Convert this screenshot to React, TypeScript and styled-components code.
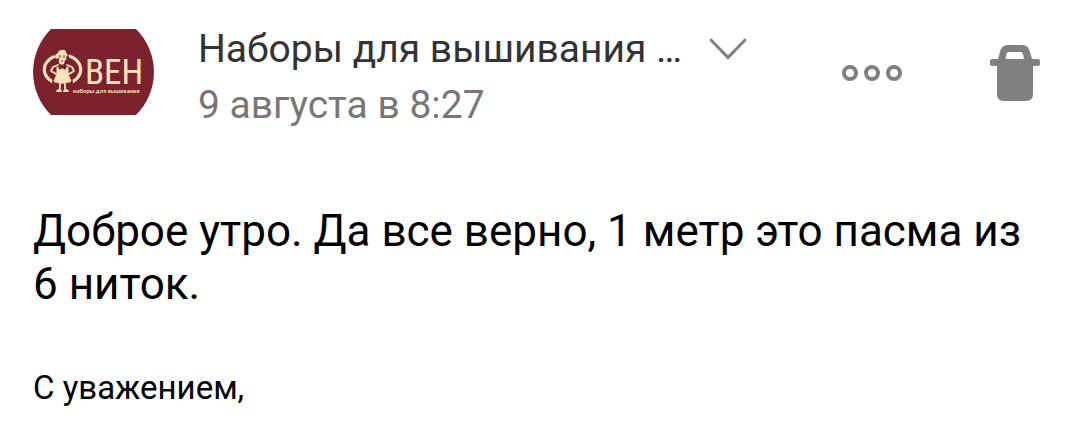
import React from "react";
import styled, { createGlobalStyle } from "styled-components";

const GlobalStyle = createGlobalStyle`
  * { box-sizing: border-box; }
  body {
    margin: 0;
    background: #fff;
    color: #000;
    font-family: Roboto, "Noto Sans", sans-serif;
  }
`;

const Message = styled.article`
  padding: 21px 33px 16px;
`;

const Header = styled.header`
  display: flex;
  align-items: flex-start;
`;

const Avatar = styled.svg`
  flex: none;
  width: 121px;
  height: 87px;
  margin: 8px 44px 0 0;
`;

const Details = styled.div`
  flex: 1;
  min-width: 0;
`;

const SenderRow = styled.div`
  display: flex;
  align-items: center;
  gap: 26px;
`;

const Line = styled.p<{ $muted?: boolean }>`
  margin: 0;
  min-width: 0;
  overflow: hidden;
  white-space: nowrap;
  text-overflow: ellipsis;
  font-size: 39px;
  line-height: 56px;
  color: ${(p) => (p.$muted ? "#777" : "#333")};
`;

const IconButton = styled.button`
  display: flex;
  flex: none;
  padding: 0;
  border: 0;
  background: none;
  color: #808080;
  cursor: pointer;
`;

const Actions = styled.div`
  display: flex;
  flex: none;
  align-items: center;
  gap: 88px;
  height: 104px;
  padding-right: 7px;
`;

const Body = styled.section`
  margin-top: 72px;
`;

const Text = styled.p`
  margin: 0;
  font-size: 44px;
  line-height: 53px;
`;

const Signature = styled.p`
  margin: 57px 0 0;
  font-size: 33px;
  line-height: 40px;
`;

const LogoText = styled.text`
  fill: #fbe3b9;
`;

const LogoName = styled.tspan`
  font-family: "Roboto Condensed", Roboto, sans-serif;
  font-size: 35px;
`;

const LogoTagline = styled.tspan`
  font-family: Lato, sans-serif;
  font-size: 6px;
  font-weight: 700;
`;

function Logo() {
  return (
    <Avatar viewBox="0 0 121 87" role="img" aria-label="Овен">
      <path d="M18 0H103A60.500 60.500 0 0 1 103 86H18A60.500 60.500 0 0 1 18 0Z" fill="#7b222e" />
      <ellipse cx="29.500" cy="40.500" rx="18.200" ry="14.500" fill="none" stroke="#fbe3b9" strokeWidth="3.200" />
      <path
        d="M21 26L25 21L29 19L35 22L36 28L34 34L40 35L43 42L39 46L40 54L34 58H25L19 54L20 46L16 42L19 35L25 34L24 31Z"
        fill="#7b222e"
      />
      <path
        d="M22 28Q22 25 25 24Q25 21 29 21Q33 20 33 24Q36 26 33 28Q34 31 32 31L31 35Q28 37 26 34L26 29Q23 31 22 28Z"
        fill="#fbe3b9"
      />
      <path d="M27 26V29M31 26V29M28 32H30" fill="none" stroke="#7b222e" strokeWidth="1" />
      <path
        d="M24 38Q29 42 35 38L35 45L38 52Q36 54 34 53Q32 55 29 54Q26 55 24 53Q22 54 21 52L24 45Z"
        fill="#fbe3b9"
        stroke="#fbe3b9"
        strokeLinejoin="round"
      />
      <path
        d="M25 36L20 38L18 42L23 45M34 36L39 38L41 42L36 45M27 55V60L24 62H28M32 55V60L35 62H31"
        fill="none"
        stroke="#fbe3b9"
        strokeWidth="1.800"
        strokeLinejoin="round"
        strokeLinecap="round"
      />
      <path d="M26 37L29 39L33 37V41L29 39L26 41Z" fill="#7b222e" />
      <LogoText>
        <LogoName x="52" y="55">ВЕН</LogoName>
        <LogoTagline x="40" y="64">наборы для вышивания</LogoTagline>
      </LogoText>
    </Avatar>
  );
}

export default function App() {
  return (
    <>
      <GlobalStyle />
      <Message>
        <Header>
          <Logo />
          <Details>
            <SenderRow>
              <Line>Наборы для вышивания …</Line>
              <IconButton aria-label="Подробнее">
                <svg width="40" height="24" viewBox="0 0 40 24" fill="none" stroke="currentColor" strokeWidth="3" strokeLinecap="round">
                  <path d="M3 3L20 20.500L37 3" />
                </svg>
              </IconButton>
            </SenderRow>
            <Line $muted>9 августа в 8:27</Line>
          </Details>
          <Actions>
            <IconButton aria-label="Ещё">
              <svg width="60" height="18" viewBox="0 0 60 18" fill="none" stroke="currentColor" strokeWidth="4">
                <circle cx="8" cy="9" r="6" />
                <circle cx="30" cy="9" r="6" />
                <circle cx="52" cy="9" r="6" />
              </svg>
            </IconButton>
            <IconButton aria-label="Удалить">
              <svg width="50" height="56" viewBox="0 0 50 56" fill="currentColor">
                <path
                  fillRule="evenodd"
                  d="M18 0H32C37 0 39 3 40 7L42 14H47A3.500 3.500 0 0 1 47 21H43V49Q43 56 36 56H14Q7 56 7 49V21H3A3.500 3.500 0 0 1 3 14H8L10 7C11 3 13 0 18 0ZM19 7Q17 7 16.500 9L15.500 14H34L33 9Q32.500 7 30.500 7Z"
                />
              </svg>
            </IconButton>
          </Actions>
        </Header>
        <Body>
          <Text>Доброе утро. Да все верно, 1 метр это пасма из 6 ниток.</Text>
          <Signature>С уважением,</Signature>
        </Body>
      </Message>
    </>
  );
}
